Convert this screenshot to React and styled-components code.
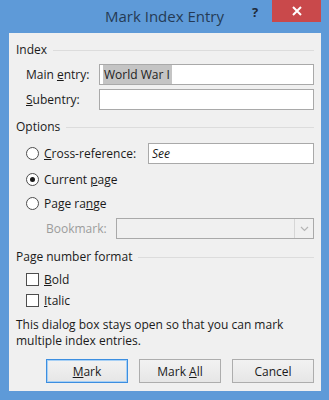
import React from "react";
import styled, { createGlobalStyle } from "styled-components";

const Global = createGlobalStyle`
  html, body { margin: 0; padding: 0; }
  body { font-family: "Open Sans", "Noto Sans", sans-serif; }
`;

const Frame = styled.div`
  width: 329px;
  height: 400px;
  background: #5e9ad8;
  display: flex;
  flex-direction: column;
  box-sizing: border-box;
`;

const TitleBar = styled.div`
  height: 33px;
  display: flex;
  align-items: flex-start;
  position: relative;
`;

const Title = styled.div`
  position: absolute;
  left: 0;
  right: 0;
  top: 6px;
  text-align: center;
  font-size: 15px;
  color: #253a55;
  letter-spacing: 0;
`;

const Help = styled.div`
  position: absolute;
  left: 252px;
  top: 3px;
  font-size: 13px;
  font-weight: 700;
  color: #1e2a3a;
`;

const Close = styled.div`
  position: absolute;
  left: 272px;
  top: 0;
  width: 49px;
  height: 22px;
  background: #c9494b;
  display: flex;
  align-items: center;
  justify-content: center;
`;

const Client = styled.div`
  margin: 0 8px 9px 9px;
  flex: 1;
  background: #f0f0f0;
  padding: 9px 7px 0 7px;
  display: flex;
  flex-direction: column;
  font-size: 12px;
  color: #1a1a1a;
`;

const GroupHeader = styled.div`
  display: flex;
  align-items: center;
  height: 16px;
  line-height: 16px;
  gap: 6px;
  margin-top: ${(p) => p.$mt || 0}px;
  &::after {
    content: "";
    flex: 1;
    height: 1px;
    background: #dcdcdc;
    margin-right: 0;
  }
`;

const Row = styled.div`
  display: flex;
  align-items: center;
  height: ${(p) => p.$h || 21}px;
  margin-top: ${(p) => p.$mt || 0}px;
  padding-left: ${(p) => p.$pl || 10}px;
`;

const Label = styled.span`
  width: ${(p) => (p.$w ? p.$w + "px" : "auto")};
  flex: none;
  color: ${(p) => (p.$disabled ? "#9c9c9c" : "#1a1a1a")};
  white-space: nowrap;
`;

const TextBox = styled.div`
  flex: 1;
  height: 21px;
  box-sizing: border-box;
  border: 1px solid #a9a9a9;
  background: ${(p) => (p.$disabled ? "#f0f0f0" : "#fff")};
  display: flex;
  align-items: center;
  padding-left: 3px;
  font-style: ${(p) => (p.$italic ? "italic" : "normal")};
  position: relative;
`;

const Selected = styled.span`
  background: #c4c4c4;
  padding: 1px 2px 1px 1px;
  color: #222;
`;

const DropArrow = styled.div`
  position: absolute;
  right: 0;
  top: 0;
  bottom: 0;
  width: 18px;
  border-left: 1px solid #d6d6d6;
  display: flex;
  align-items: center;
  justify-content: center;
`;

const Radio = styled.span`
  width: 13px;
  height: 13px;
  box-sizing: border-box;
  border-radius: 50%;
  border: 1px solid #4d4d4d;
  background: #fff;
  flex: none;
  margin-right: 5px;
  display: flex;
  align-items: center;
  justify-content: center;
  &::after {
    content: "";
    width: 5px;
    height: 5px;
    border-radius: 50%;
    background: ${(p) => (p.$checked ? "#1a1a1a" : "transparent")};
  }
`;

const Check = styled.span`
  width: 13px;
  height: 13px;
  box-sizing: border-box;
  border: 1px solid #4d4d4d;
  background: #fff;
  flex: none;
  margin-right: 5px;
`;

const Note = styled.p`
  margin: 9px 0 0 0;
  line-height: 16px;
  font-size: 12px;
`;

const Buttons = styled.div`
  display: flex;
  justify-content: flex-end;
  gap: 11px;
  margin-top: 10px;
`;

const Button = styled.button`
  width: 82px;
  height: 24px;
  box-sizing: border-box;
  border: 1px solid ${(p) => (p.$default ? "#3c8ee0" : "#adadad")};
  box-shadow: ${(p) => (p.$default ? "inset 0 0 0 1px #a7d0f5" : "none")};
  background: linear-gradient(#f2f2f2, #e6e6e6);
  font-family: inherit;
  font-size: 12px;
  color: #1a1a1a;
  padding: 0;
`;

export default function App() {
  return (
    <>
      <Global />
      <Frame>
        <TitleBar>
          <Title>Mark Index Entry</Title>
          <Help>?</Help>
          <Close>
            <svg width="10" height="10" viewBox="0 0 10 10">
              <path d="M1 1 L9 9 M9 1 L1 9" stroke="#fff" strokeWidth="2" />
            </svg>
          </Close>
        </TitleBar>
        <Client>
          <GroupHeader>Index</GroupHeader>
          <Row $mt={6}>
            <Label $w={73}>Main <u>e</u>ntry:</Label>
            <TextBox>
              <Selected>World War I</Selected>
            </TextBox>
          </Row>
          <Row $mt={4}>
            <Label $w={73}><u>S</u>ubentry:</Label>
            <TextBox />
          </Row>
          <GroupHeader $mt={9}>Options</GroupHeader>
          <Row $mt={8} $h={20}>
            <Radio />
            <Label $w={104}><u>C</u>ross-reference:</Label>
            <TextBox $italic>See</TextBox>
          </Row>
          <Row $mt={6} $h={20}>
            <Radio $checked />
            <Label>Current <u>p</u>age</Label>
          </Row>
          <Row $mt={4} $h={20}>
            <Radio />
            <Label>Page ra<u>n</u>ge</Label>
          </Row>
          <Row $mt={5} $pl={30}>
            <Label $w={70} $disabled>Bookmark:</Label>
            <TextBox $disabled>
              <DropArrow>
                <svg width="9" height="6" viewBox="0 0 9 6">
                  <path d="M1 1 L4.5 4.5 L8 1" stroke="#b5b5b5" strokeWidth="1.2" fill="none" />
                </svg>
              </DropArrow>
            </TextBox>
          </Row>
          <GroupHeader $mt={10}>Page number format</GroupHeader>
          <Row $mt={6} $h={16}>
            <Check />
            <Label><u>B</u>old</Label>
          </Row>
          <Row $mt={5} $h={16}>
            <Check />
            <Label><u>I</u>talic</Label>
          </Row>
          <Note>
            This dialog box stays open so that you can mark
            <br />
            multiple index entries.
          </Note>
          <Buttons>
            <Button $default><u>M</u>ark</Button>
            <Button>Mark <u>A</u>ll</Button>
            <Button>Cancel</Button>
          </Buttons>
        </Client>
      </Frame>
    </>
  );
}
